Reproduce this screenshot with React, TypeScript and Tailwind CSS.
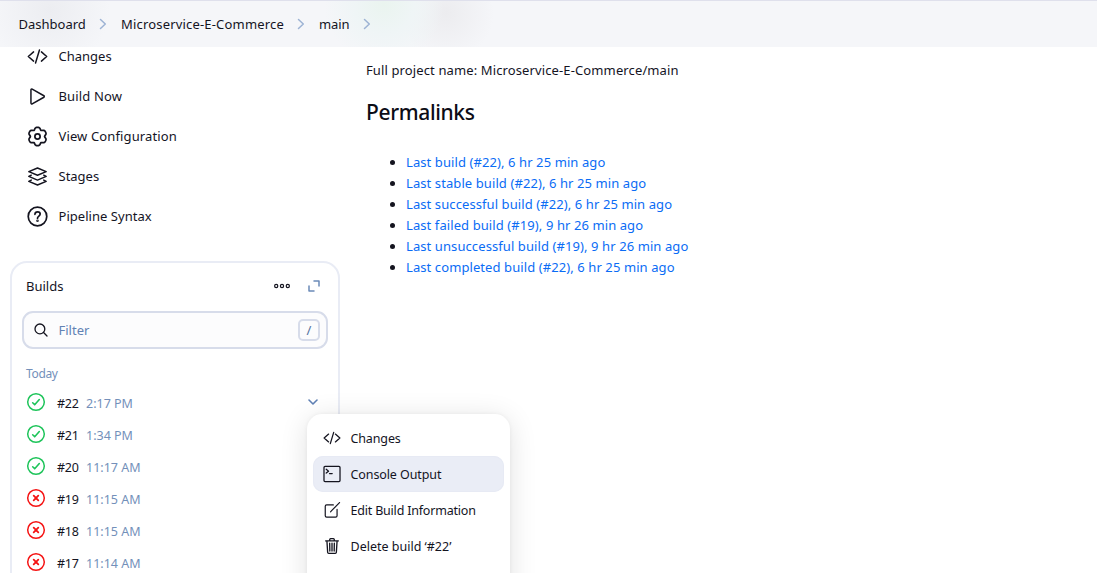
import React from "react";

type IconProps = { className?: string };

const Svg = ({ className, children, sw = 32 }: IconProps & { children: React.ReactNode; sw?: number }) => (
  <svg
    viewBox="0 0 512 512"
    className={`block shrink-0 ${className ?? ""}`}
    fill="none"
    stroke="currentColor"
    strokeWidth={sw}
    strokeLinecap="round"
    strokeLinejoin="round"
  >
    {children}
  </svg>
);

// Six rounded lobes, the first one pointing straight up.
const gearOutline =
  Array.from({ length: 72 }, (_, i) => {
    const a = (i / 72) * Math.PI * 2;
    const r = 205 + 26 * Math.cos(6 * a) - 7 * Math.cos(12 * a);
    return `${i ? "L" : "M"}${(256 + r * Math.sin(a)).toFixed(1)} ${(256 - r * Math.cos(a)).toFixed(1)}`;
  }).join("") + "Z";

const CodeIcon = ({ className }: IconProps) => (
  <Svg className={className} sw={36}>
    <path d="M160 368L32 256l128-112M352 368l128-112-128-112M304 96l-96 320" />
  </Svg>
);
const PlayIcon = ({ className }: IconProps) => (
  <Svg className={className} sw={36}>
    <path d="M96 96v320c0 17.44 17 28.52 31 20.16l285-162c12.12-7.25 12.12-29 0-36.3L127 75.84c-14-8.36-31 2.72-31 20.16z" />
  </Svg>
);
const GearIcon = ({ className }: IconProps) => (
  <Svg className={className} sw={42}>
    <circle cx="256" cy="256" r="64" />
    <path d={gearOutline} />
  </Svg>
);
const LayersIcon = ({ className }: IconProps) => (
  <Svg className={className} sw={36}>
    <path d="M468 138L256 50 44 138l212 88 212-88z" />
    <path d="M104 224l-60 30 212 90 212-90-60-30" />
    <path d="M104 344l-60 30 212 90 212-90-60-30" />
  </Svg>
);
const HelpIcon = ({ className }: IconProps) => (
  <Svg className={className} sw={42}>
    <circle cx="256" cy="256" r="226" />
    <path d="M194 202c2-40 29-59 65-59 35 0 62 22 62 54 0 30-17 42-37 56-19 14-28 25-28 45" />
    <circle cx="256" cy="360" r="10" fill="currentColor" />
  </Svg>
);
const SearchIcon = ({ className }: IconProps) => (
  <Svg className={className} sw={42}>
    <circle cx="221" cy="221" r="157" />
    <path d="M338 338l110 110" />
  </Svg>
);
const DotsIcon = ({ className }: IconProps) => (
  <svg viewBox="0 0 16 6" className={className} fill="none" stroke="currentColor" strokeWidth="1.2">
    <circle cx="2.2" cy="3" r="1.6" />
    <circle cx="8" cy="3" r="1.6" />
    <circle cx="13.8" cy="3" r="1.6" />
  </svg>
);
const ExpandIcon = ({ className }: IconProps) => (
  <svg viewBox="0 0 12 12" className={className} fill="none" stroke="currentColor" strokeWidth="1.5" strokeLinecap="round" strokeLinejoin="round">
    <path d="M6 1h5v5M1 6v5h5" />
  </svg>
);
const ChevronRight = ({ className }: IconProps) => (
  <svg viewBox="0 0 8 12" className={className} fill="none" stroke="currentColor" strokeWidth="1.5" strokeLinecap="round" strokeLinejoin="round">
    <path d="M1.5 1.5L6.3 6l-4.8 4.5" />
  </svg>
);
const ChevronDown = ({ className }: IconProps) => (
  <svg viewBox="0 0 10 6" className={className} fill="none" stroke="currentColor" strokeWidth="1.6" strokeLinecap="round" strokeLinejoin="round">
    <path d="M1 1l4 4 4-4" />
  </svg>
);
const TerminalIcon = ({ className }: IconProps) => (
  <Svg className={className} sw={36}>
    <rect x="28" y="40" width="456" height="432" rx="30" />
    <path d="M92 122l66 54-66 54M186 242h76" />
  </Svg>
);
const EditIcon = ({ className }: IconProps) => (
  <Svg className={className} sw={34}>
    <path d="M400 240v176a40 40 0 01-40 40H104a40 40 0 01-40-40V152a40 40 0 0140-40h190M232 288L470 44M226 294l-10 12" />
  </Svg>
);
const TrashIcon = ({ className }: IconProps) => (
  <Svg className={className} sw={38}>
    <path d="M112 112l20 320c.95 18.49 14.4 32 32 32h184c17.67 0 30.87-13.51 32-32l20-320M76 112h360M192 112V72a23.93 23.93 0 0124-24h80a23.93 23.93 0 0124 24v40M256 176v224M190 176l4 224M322 176l-4 224" />
  </Svg>
);
const StatusIcon = ({ ok }: { ok: boolean }) => (
  <svg viewBox="0 0 20 20" className={`block size-5 shrink-0 ${ok ? "text-[#1ec45a]" : "text-[#f51414]"}`} fill="none" stroke="currentColor" strokeLinecap="round" strokeLinejoin="round">
    <circle cx="10" cy="10" r="8.3" strokeWidth="1.5" />
    <path d={ok ? "M6.7 10.8l2 2 4.6-5.3" : "M7.7 7.7l4.6 4.6M12.3 7.7l-4.6 4.6"} strokeWidth={ok ? 1.6 : 1.8} />
  </svg>
);

const tasks = [
  { label: "Changes", Icon: CodeIcon, track: "tracking-[0px]" },
  { label: "Build Now", Icon: PlayIcon, track: "tracking-[0.15px]" },
  { label: "View Configuration", Icon: GearIcon, track: "tracking-[0.13px]" },
  { label: "Stages", Icon: LayersIcon, track: "tracking-[0px]" },
  { label: "Pipeline Syntax", Icon: HelpIcon, track: "tracking-[0.04px]" },
];

const builds = [
  { id: "#22", time: "2:17 PM", ok: true },
  { id: "#21", time: "1:34 PM", ok: true },
  { id: "#20", time: "11:17 AM", ok: true },
  { id: "#19", time: "11:15 AM", ok: false },
  { id: "#18", time: "11:15 AM", ok: false },
  { id: "#17", time: "11:14 AM", ok: false },
];

const permalinks = [
  "Last build (#22), 6 hr 25 min ago",
  "Last stable build (#22), 6 hr 25 min ago",
  "Last successful build (#22), 6 hr 25 min ago",
  "Last failed build (#19), 9 hr 26 min ago",
  "Last unsuccessful build (#19), 9 hr 26 min ago",
  "Last completed build (#22), 6 hr 25 min ago",
];

const menu = [
  { label: "Changes", Icon: CodeIcon, track: "tracking-[-0.13px]" },
  { label: "Console Output", Icon: TerminalIcon, track: "tracking-[-0.1px]", active: true },
  { label: "Edit Build Information", Icon: EditIcon, track: "tracking-[-0.2px]" },
  { label: "Delete build ‘#22’", Icon: TrashIcon, track: "tracking-[0px]" },
];

export default function App() {
  return (
    <div className="flex h-[573px] w-[1097px] flex-col overflow-hidden bg-white font-['Noto_Sans',sans-serif] text-[13px] leading-5 text-[#14141f]">
      <header className="relative z-10 flex h-[47px] shrink-0 items-center border-t border-[#dfe0ec] bg-[#f5f6f9] bg-[radial-gradient(circle_at_50px_8px,#ecedf1_0,transparent_60px),radial-gradient(circle_at_384px_3px,#eaf4ef_0,#eff5f6_30px,transparent_60px),radial-gradient(circle_at_446px_12px,#ececef_0,transparent_48px)] pl-[18.5px]">
        <span className="w-[66.5px] whitespace-nowrap">Dashboard</span>
        <ChevronRight className="ml-[14px] h-3 w-2 text-[#9db3d4]" />
        <span className="ml-[14px] w-[163px] whitespace-nowrap tracking-[0.18px]">Microservice-E-Commerce</span>
        <ChevronRight className="ml-[13px] h-3 w-2 text-[#9db3d4]" />
        <span className="ml-[14px] w-[31px] whitespace-nowrap tracking-[-0.1px]">main</span>
        <ChevronRight className="ml-[13px] h-3 w-2 text-[#9db3d4]" />
      </header>

      <div className="flex min-h-0 flex-1">
        <aside className="-mt-[11px] w-[350px] shrink-0">
          <nav className="flex flex-col pl-[26.5px]">
            {tasks.map(({ label, Icon, track }) => (
              <a key={label} className={`flex h-10 items-center gap-[11px] ${track}`}>
                <Icon className="size-[21px]" />
                <span>{label}</span>
              </a>
            ))}
          </nav>

          <section className="relative ml-[10px] mt-[25px] h-[400px] w-[330px] rounded-[17px] border-2 border-[#e9ecf5] px-[10px]">
            <div className="flex h-[46px] items-center pl-[4px]">
              <h2 className="flex-1">Builds</h2>
              <DotsIcon className="h-1.5 w-4" />
              <ExpandIcon className="ml-[18px] mr-[8px] size-3 text-[#6b8ab8]" />
            </div>
            <div className="mt-[2px] flex h-[38px] items-center rounded-[11px] border-2 border-[#d7dcea] bg-[#fcfcfd] pl-[9px] pr-[6px]">
              <SearchIcon className="size-[16px]" />
              <span className="ml-[9.5px] flex-1">
                <span className="text-[#6282b4]">Filter</span>
              </span>
              <kbd className="flex size-[22px] items-center justify-center rounded-[5px] border-2 border-[#d7dcea] font-[inherit] text-[13px] text-[#54719f]">/</kbd>
            </div>
            <div className="mt-[15px] pl-[4px] text-[12px] leading-5 tracking-[-0.35px] text-[#7390ba]">Today</div>
            <ul className="mt-[3px]">
              {builds.map((b, i) => (
                <li key={b.id} className="flex h-8 items-center pl-[4px] text-[12.5px]">
                  <span className="-mt-[3px]"><StatusIcon ok={b.ok} /></span>
                  <span className="ml-[11px] w-[29px] pt-[2px] tracking-[-0.3px]">{b.id}</span>
                  <span className="flex-1 pt-[2px] text-[#7390ba]">{b.time}</span>
                  {i === 0 && <ChevronDown className="-mt-[3px] mr-[10px] h-1.5 w-2.5 text-[#5f80b5]" />}
                </li>
              ))}
            </ul>

            <div className="absolute left-[295px] top-[151px] flex h-[240px] w-[203px] flex-col rounded-[15px] bg-white p-[6px] shadow-[0_4px_28px_rgba(0,0,0,0.12),0_0_4px_rgba(0,0,0,0.05)]">
              {menu.map(({ label, Icon, active, track }) => (
                <a key={label} className={`flex h-9 items-center gap-[9.5px] rounded-[10px] pl-[10px] text-[12.5px] ${track} ${active ? "bg-[#eaedf6] shadow-[inset_0_0_0_1px_#e7eaf4]" : ""}`}>
                  <Icon className="size-[18px]" />
                  <span className="whitespace-nowrap pt-[2px]">{label}</span>
                </a>
              ))}
            </div>
          </section>
        </aside>

        <main className="pl-4 pt-[13px]">
          <p className="tracking-[0.12px]">Full project name: Microservice-E-Commerce/main</p>
          <h1 className="mt-[17px] text-[21px] font-medium leading-[30px] tracking-[-0.35px] text-[#0c0c16]">Permalinks</h1>
          <ul className="mt-[25px] list-disc pl-10 leading-[21px] tracking-[0.09px] marker:text-[#14141f]">
            {permalinks.map((p) => (
              <li key={p}>
                <a className="text-[#0a6cf5]">{p}</a>
              </li>
            ))}
          </ul>
        </main>
      </div>
    </div>
  );
}
